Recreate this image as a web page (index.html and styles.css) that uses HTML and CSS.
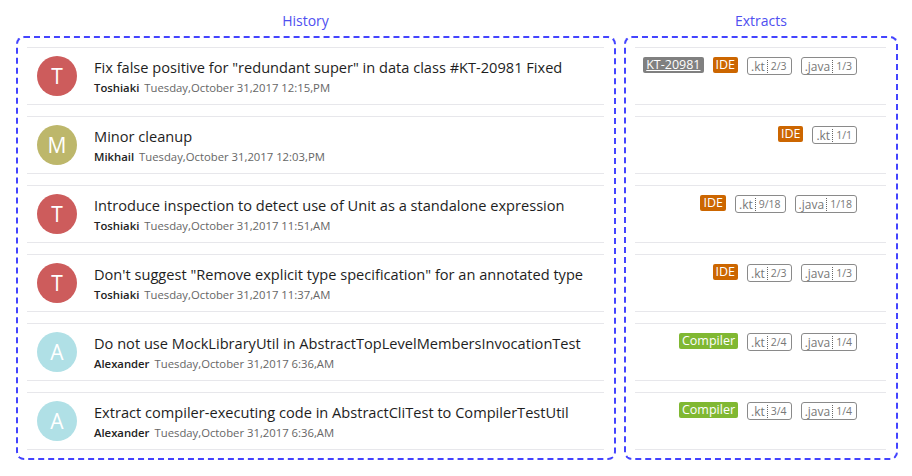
FILE: index.html
```html
<!DOCTYPE html>
<html>
<head>
<meta charset="utf-8">
<link rel="stylesheet" href="styles.css">
</head>
<body>
<div class="page">
  <section class="col col-history">
    <h2 class="col-title">History</h2>
    <div class="box">
      <div class="item">
        <div class="avatar av-red">T</div>
        <div class="info">
          <div class="msg">Fix false positive for "redundant super" in data class #KT-20981 Fixed</div>
          <div class="meta"><span class="author">Toshiaki</span><span class="date">Tuesday,October 31,2017 12:15,PM</span></div>
        </div>
      </div>
      <div class="item">
        <div class="avatar av-olive">M</div>
        <div class="info">
          <div class="msg">Minor cleanup</div>
          <div class="meta"><span class="author">Mikhail</span><span class="date">Tuesday,October 31,2017 12:03,PM</span></div>
        </div>
      </div>
      <div class="item">
        <div class="avatar av-red">T</div>
        <div class="info">
          <div class="msg">Introduce inspection to detect use of Unit as a standalone expression</div>
          <div class="meta"><span class="author">Toshiaki</span><span class="date">Tuesday,October 31,2017 11:51,AM</span></div>
        </div>
      </div>
      <div class="item">
        <div class="avatar av-red">T</div>
        <div class="info">
          <div class="msg">Don't suggest "Remove explicit type specification" for an annotated type</div>
          <div class="meta"><span class="author">Toshiaki</span><span class="date">Tuesday,October 31,2017 11:37,AM</span></div>
        </div>
      </div>
      <div class="item">
        <div class="avatar av-cyan">A</div>
        <div class="info">
          <div class="msg">Do not use MockLibraryUtil in AbstractTopLevelMembersInvocationTest</div>
          <div class="meta"><span class="author">Alexander</span><span class="date">Tuesday,October 31,2017 6:36,AM</span></div>
        </div>
      </div>
      <div class="item">
        <div class="avatar av-cyan">A</div>
        <div class="info">
          <div class="msg">Extract compiler-executing code in AbstractCliTest to CompilerTestUtil</div>
          <div class="meta"><span class="author">Alexander</span><span class="date">Tuesday,October 31,2017 6:36,AM</span></div>
        </div>
      </div>
    </div>
  </section>
  <section class="col col-extracts">
    <h2 class="col-title">Extracts</h2>
    <div class="box">
      <div class="ext">
        <span class="tag tag-issue">KT-20981</span>
        <span class="tag tag-ide">IDE</span>
        <span class="file"><span class="ext-name">.kt</span><span class="count">2/3</span></span>
        <span class="file"><span class="ext-name">.java</span><span class="count">1/3</span></span>
      </div>
      <div class="ext">
        <span class="tag tag-ide">IDE</span>
        <span class="file"><span class="ext-name">.kt</span><span class="count">1/1</span></span>
      </div>
      <div class="ext">
        <span class="tag tag-ide">IDE</span>
        <span class="file"><span class="ext-name">.kt</span><span class="count">9/18</span></span>
        <span class="file"><span class="ext-name">.java</span><span class="count">1/18</span></span>
      </div>
      <div class="ext">
        <span class="tag tag-ide">IDE</span>
        <span class="file"><span class="ext-name">.kt</span><span class="count">2/3</span></span>
        <span class="file"><span class="ext-name">.java</span><span class="count">1/3</span></span>
      </div>
      <div class="ext">
        <span class="tag tag-compiler">Compiler</span>
        <span class="file"><span class="ext-name">.kt</span><span class="count">2/4</span></span>
        <span class="file"><span class="ext-name">.java</span><span class="count">1/4</span></span>
      </div>
      <div class="ext">
        <span class="tag tag-compiler">Compiler</span>
        <span class="file"><span class="ext-name">.kt</span><span class="count">3/4</span></span>
        <span class="file"><span class="ext-name">.java</span><span class="count">1/4</span></span>
      </div>
    </div>
  </section>
</div>
</body>
</html>
```

FILE: styles.css
```css
html, body {
  margin: 0;
  padding: 0;
  background: #ffffff;
}
body {
  font-family: "Open Sans", "Noto Sans", sans-serif;
  color: #222;
}
.page {
  display: flex;
  gap: 8px;
  padding: 0 0 0 16px;
}
.col-history { width: 600px; }
.col-extracts { width: 274px; }
.col-title {
  margin: 0;
  height: 36px;
  box-sizing: border-box;
  padding-top: 11px;
  text-align: center;
  font-size: 14px;
  font-weight: 400;
  line-height: 20px;
  color: #4f4ff0;
}
.col-history .col-title { padding-right: 21px; }
.box {
  border: 2px dashed #4444ff;
  border-radius: 8px;
  padding: 9px 10px 8px 9px;
  display: flex;
  flex-direction: column;
  gap: 11px;
}
.item {
  height: 58px;
  box-sizing: border-box;
  border-top: 1px solid #e7e7eb;
  border-bottom: 1px solid #e7e7eb;
  display: flex;
  align-items: center;
  padding-left: 10px;
}
.avatar {
  width: 40px;
  height: 40px;
  border-radius: 50%;
  color: #fff;
  font-size: 21px;
  line-height: 40px;
  text-align: center;
  flex: none;
}
.av-red { background: #cd5c5c; }
.av-olive { background: #bdb76b; }
.av-cyan { background: #b0e0e6; }
.info {
  margin-left: 17px;
  display: flex;
  flex-direction: column;
  padding-top: 1px;
}
.msg {
  font-size: 14.6px;
  line-height: 20px;
  color: #1e1e1e;
}
.meta {
  font-size: 11.3px;
  line-height: 16px;
  margin-top: 3px;
}
.author {
  font-weight: 600;
  color: #222;
  margin-right: 5px;
}
.date { color: #666; }
.ext {
  height: 58px;
  box-sizing: border-box;
  border-top: 1px solid #e7e7eb;
  border-bottom: 1px solid #e7e7eb;
  display: flex;
  justify-content: flex-end;
  align-items: flex-start;
  gap: 9px;
  padding: 9px 29px 0 0;
}
.tag {
  font-size: 12.5px;
  line-height: 16px;
  padding: 0 3px;
  border-radius: 2px;
  color: #fff;
}
.tag-issue { background: #808080; text-decoration: underline; }
.tag-ide { background: #cc6600; }
.tag-compiler { background: #80b832; }
.file {
  display: flex;
  align-items: center;
  border: 1px solid #8a8a8a;
  border-radius: 3px;
  height: 16px;
  font-size: 12px;
  color: #777;
}
.ext-name {
  padding: 0 2px 0 3px;
  border-right: 1px dotted #666;
  line-height: 13px;
}
.count {
  font-size: 10.5px;
  padding: 0 4px 0 3px;
  line-height: 13px;
}
```
